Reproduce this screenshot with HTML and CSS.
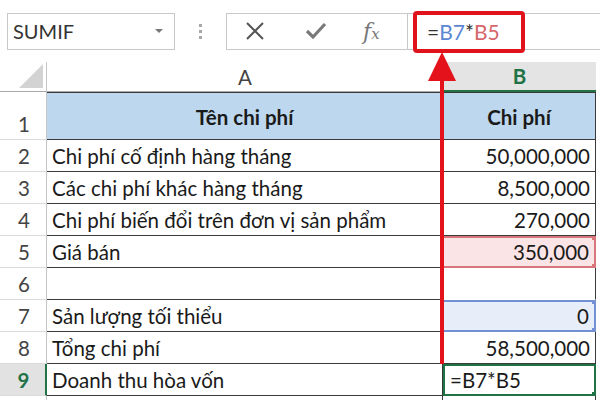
FILE: index.html
```html
<!DOCTYPE html>
<html lang="vi">

<head>
    <meta charset="UTF-8">
    <meta name="viewport" content="width=device-width, initial-scale=1.0">
    <title>Điểm hòa vốn</title>
    <link rel="stylesheet" href="styles.css">
</head>

<body>
    <div class="toolbar">
        <div class="name-box">
            <span>SUMIF</span>
            <span class="caret"></span>
        </div>
        <div class="grip"><i></i><i></i><i></i></div>
        <div class="fbar-buttons">
            <svg class="btn-x" width="20" height="20" viewBox="0 0 20 20">
                <path d="M2 2 L18 18 M18 2 L2 18" stroke="#555" stroke-width="2" fill="none" />
            </svg>
            <svg class="btn-ok" width="22" height="20" viewBox="0 0 22 20">
                <path d="M2 10 L8 16 L20 3" stroke="#7a7a7a" stroke-width="3.2" fill="none" />
            </svg>
            <span class="btn-fx">f<small>x</small></span>
        </div>
        <div class="formula-input">
            <span class="formula">=<span class="ref-blue">B7</span>*<span class="ref-red">B5</span></span>
            <div class="highlight-box"></div>
        </div>
    </div>

    <div class="sheet">
        <div class="corner"><span class="tri"></span></div>
        <div class="col-head">A</div>
        <div class="col-head active">B</div>

        <div class="row-head tall">1</div>
        <div class="cell head first-col first-row">Tên chi phí</div>
        <div class="cell head first-row">Chi phí</div>

        <div class="row-head">2</div>
        <div class="cell first-col">Chi phí cố định hàng tháng</div>
        <div class="cell num">50,000,000</div>

        <div class="row-head">3</div>
        <div class="cell first-col">Các chi phí khác hàng tháng</div>
        <div class="cell num">8,500,000</div>

        <div class="row-head">4</div>
        <div class="cell first-col">Chi phí biến đổi trên đơn vị sản phẩm</div>
        <div class="cell num">270,000</div>

        <div class="row-head">5</div>
        <div class="cell first-col">Giá bán</div>
        <div class="cell num ref red">350,000<i class="h top"></i><i class="h bottom"></i></div>

        <div class="row-head">6</div>
        <div class="cell first-col"></div>
        <div class="cell num blank"></div>

        <div class="row-head">7</div>
        <div class="cell first-col">Sản lượng tối thiểu</div>
        <div class="cell num ref blue">0<i class="h top"></i><i class="h bottom"></i></div>

        <div class="row-head">8</div>
        <div class="cell first-col">Tổng chi phí</div>
        <div class="cell num">58,500,000</div>

        <div class="row-head current">9</div>
        <div class="cell first-col">Doanh thu hòa vốn</div>
        <div class="cell editing">=B7*B5<i class="h bottom"></i></div>

        <div class="row-head"></div>
        <div class="cell first-col"></div>
        <div class="cell"></div>
    </div>

    <svg class="arrow" width="34" height="314" viewBox="0 0 34 314">
        <path d="M15 26 H19 V313 H15 Z" fill="#e3121b" />
        <path d="M17 1 L31 30 L3 30 Z" fill="#e3121b" />
    </svg>
</body>

</html>
```

FILE: styles.css
```css
body {
    margin: 0;
    width: 600px;
    height: 400px;
    overflow: hidden;
    background: #fff;
    font-family: Lato, "Open Sans", sans-serif;
    color: #1a1a1a;
    position: relative;
}

.toolbar {
    display: flex;
    align-items: center;
    height: 62px;
    padding-left: 7px;
    box-sizing: border-box;
}

.name-box {
    width: 168px;
    height: 37px;
    box-sizing: border-box;
    border: 1px solid #c9c9c9;
    display: flex;
    align-items: center;
    justify-content: space-between;
    padding: 0 11px 0 5px;
    font-size: 20px;
    color: #333;
}

.caret {
    width: 0;
    height: 0;
    border-left: 4px solid transparent;
    border-right: 4px solid transparent;
    border-top: 4px solid #777;
}

.grip {
    width: 51px;
    display: flex;
    flex-direction: column;
    align-items: center;
    gap: 3px;
}

.grip i {
    width: 3px;
    height: 3px;
    background: #a8a8a8;
}

.fbar-buttons {
    width: 181px;
    height: 37px;
    box-sizing: border-box;
    border: 1px solid #c9c9c9;
    border-right: none;
    display: flex;
    align-items: center;
}

.btn-x {
    margin-left: 18px;
}

.btn-ok {
    margin-left: 40px;
}

.btn-fx {
    margin-left: 36px;
    font-family: "DejaVu Serif", serif;
    font-style: italic;
    font-size: 22px;
    color: #777;
}

.btn-fx small {
    font-size: 15px;
}

.formula-input {
    flex: 1;
    height: 37px;
    box-sizing: border-box;
    border: 1px solid #c9c9c9;
    border-right: none;
    position: relative;
    display: flex;
    align-items: center;
    padding-left: 19px;
}

.formula {
    font-size: 21px;
    color: #333;
}

.ref-blue {
    color: #5b86d3;
}

.ref-red {
    color: #d6666b;
}

.highlight-box {
    position: absolute;
    left: 5px;
    top: -3px;
    width: 112px;
    height: 42px;
    box-sizing: border-box;
    border: 4px solid #e0121c;
    border-radius: 4px;
}

.sheet {
    display: grid;
    grid-template-columns: 47px 396px 153px 4px;
    grid-template-rows: 30px 48px;
    grid-auto-rows: 32px;
    height: 338px;
    overflow: hidden;
    font-size: 20.5px;
}

.sheet > *:nth-child(3n) {
    grid-column: 3;
}

.corner {
    border-right: 1px solid #c6c6c6;
    border-bottom: 1px solid #aaa;
    position: relative;
}

.tri {
    position: absolute;
    right: 3px;
    bottom: 3px;
    width: 0;
    height: 0;
    border-left: 24px solid transparent;
    border-bottom: 24px solid #d3d3d3;
}

.col-head {
    display: flex;
    align-items: center;
    justify-content: center;
    border-bottom: 1px solid #aaa;
    color: #444;
}

.col-head.active {
    background: #e4e4e4;
    border-bottom: 2px solid #217346;
    color: #217346;
    font-weight: bold;
}

.row-head {
    grid-column: 1;
    display: flex;
    align-items: center;
    justify-content: center;
    padding-left: 2px;
    border-right: 1px solid #c6c6c6;
    border-bottom: 1px solid #dadada;
    color: #444;
}

.row-head.tall {
    align-items: flex-end;
    padding-bottom: 3px;
}

.row-head.current {
    background: #e2e2e2;
    color: #217346;
    font-weight: bold;
    border-right: 2px solid #217346;
}

.cell {
    display: flex;
    align-items: center;
    padding: 0 5px;
    border-right: 1px solid #3a3a3a;
    border-bottom: 1px solid #3a3a3a;
    white-space: nowrap;
    overflow: hidden;
    position: relative;
}

.cell.first-col {
    grid-column: 2;
}

.cell.head {
    background: #bdd7ee;
    font-weight: bold;
    justify-content: center;
    border-top: 1px solid #3a3a3a;
    padding-top: 2px;
}

.cell.num {
    justify-content: flex-end;
}

.cell.blank {
    border-bottom-color: transparent;
}

.cell.ref.red {
    background: #fbe4e5;
    border: 2px solid #d9767b;
    border-left: none;
}

.cell.ref.blue {
    background: #e7edf9;
    border: 2px solid #7391d6;
    border-left: none;
}

.cell.editing {
    border: 2px solid #217346;
}

.h {
    position: absolute;
    right: -3px;
    width: 5px;
    height: 5px;
}

.red .h {
    background: #d9767b;
}

.blue .h {
    background: #7391d6;
}

.editing .h {
    background: #217346;
}

.h.top {
    top: -3px;
}

.h.bottom {
    bottom: -3px;
}

.arrow {
    position: absolute;
    left: 425px;
    top: 51px;
}
```
